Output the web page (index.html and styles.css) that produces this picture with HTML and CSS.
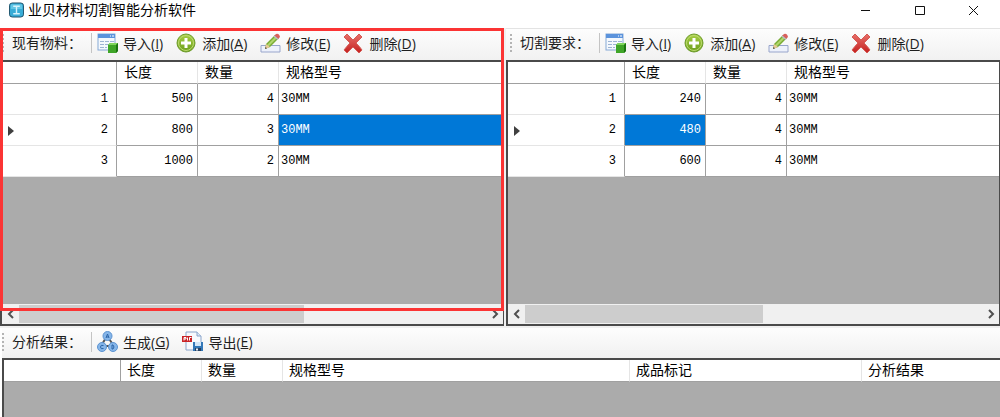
FILE: index.html
```html
<!DOCTYPE html>
<html lang="zh-cn">

<head>
  <meta charset="UTF-8">
  <title>业贝材料切割智能分析软件</title>
  <link rel="stylesheet" href="styles.css">
</head>

<body>
  <!-- 图标 -->
  <svg class="symbols" aria-hidden="true">
    <defs>
      <linearGradient id="green" x1="0" y1="0" x2="0" y2="1">
        <stop offset="0" stop-color="#a9cf45"/>
        <stop offset="1" stop-color="#6a9d1c"/>
      </linearGradient>
      <linearGradient id="red" x1="0" y1="0" x2="0" y2="1">
        <stop offset="0" stop-color="#e8706a"/>
        <stop offset="1" stop-color="#c4201f"/>
      </linearGradient>
    </defs>
    <symbol id="import" viewBox="0 0 21 21">
      <rect x="1" y="1" width="17" height="16" fill="#f4f8fd" stroke="#86a9d6"/>
      <rect x="1" y="1" width="17" height="4" fill="#5b93dc"/>
      <path d="M13 3h1M15 3h2" stroke="#fff"/>
      <path d="M3 8.500h4M8 8.500h4M13 8.500h4M3 11.500h4M8 11.500h4M3 14.500h4M8 14.500h2" stroke="#9db4d3"/>
      <path d="M11 12l2-2h8v8l-2 2h-8z" fill="#3fa528"/>
      <path d="M11 12l2-2h8l-2 2z" fill="#7fd45c"/>
      <path d="M19 12l2-2v8l-2 2z" fill="#1b7410"/>
    </symbol>
    <symbol id="add" viewBox="0 0 21 21">
      <circle cx="10" cy="10" r="9" fill="url(#green)" stroke="#6f9d2c"/>
      <circle cx="10" cy="10" r="7.500" fill="none" stroke="#bcdb70"/>
      <path d="M8.500 5h3v3.500H15v3h-3.500V15h-3v-3.500H5v-3h3.500z" fill="#fff"/>
    </symbol>
    <symbol id="edit" viewBox="0 0 21 21">
      <path d="M1 12.500h19v6.500H1z" fill="#edf1fb" stroke="#98a5cb"/>
      <path d="M5 16l1-5L15 2l4 3-9 9z" fill="#79ab34"/>
      <path d="M7 12L16 3l1.500 1.500-9 9z" fill="#b0d66c"/>
      <path d="M14 3l2-2q3-1 4 3l-2 2z" fill="#d9605c"/>
      <path d="M13.500 3.500l1-1 4 3.500-1 1z" fill="#b9bcc4"/>
      <path d="M5 16l1-5 4 3z" fill="#e9c898"/>
      <path d="M5 16l.5-2 1.500 1.200z" fill="#444"/>
    </symbol>
    <symbol id="delete" viewBox="0 0 21 21">
      <path d="M4 1l6 6 6-6 3 3q-3 3-6 6 4 4 6 7l-3 3q-3-3-6-6-3 3-6 6l-3-3q3-4 6-7-3-3-6-6z" fill="url(#red)" stroke="#d55a54"/>
    </symbol>
    <symbol id="generate" viewBox="0 0 21 21">
      <path d="M10 5L4 15h13z" fill="none" stroke="#555" stroke-width="2"/>
      <g fill="#86b6e9" stroke="#5c93d1">
        <circle cx="10.500" cy="5" r="4.500"/>
        <circle cx="5" cy="16" r="4.500"/>
        <circle cx="16" cy="16" r="4.500"/>
      </g>
      <g fill="none" stroke="#2b64a8">
        <path d="M9 7l1.500-4L12 7M9.500 6h2"/>
        <path d="M6.500 14.500q-3-1-3 1.500t3 1.500"/>
        <path d="M15 14v4h1q2-2 0-4z"/>
      </g>
    </symbol>
    <symbol id="export" viewBox="0 0 21 21">
      <path d="M4 1h11l4 4v14H4z" fill="#f7f9fd" stroke="#8aa5cb"/>
      <path d="M15 1v4h4" fill="#dbe6f5" stroke="#8aa5cb"/>
      <path d="M0 5h10v6H0z" fill="#c92327"/>
      <path d="M2 9.500V6.500h2v1.500H2M5.500 6.500v3M7.500 9.500v-3h2" fill="none" stroke="#fff"/>
      <path d="M11 11h10v9H11z" fill="#3377b7"/>
      <path d="M13 11h6v4h-6z" fill="#d3e6f7"/>
      <path d="M13 17h6v3h-6z" fill="#243f60"/>
      <path d="M14 17.500h2v2h-2z" fill="#e6eef7"/>
    </symbol>
    <symbol id="left" viewBox="0 0 8 10">
      <path d="M6 1L2 5l4 4" fill="none" stroke="#505050" stroke-width="2"/>
    </symbol>
    <symbol id="right" viewBox="0 0 8 10">
      <path d="M2 1l4 4-4 4" fill="none" stroke="#505050" stroke-width="2"/>
    </symbol>
  </svg>

  <div class="window">
    <header class="titlebar">
      <svg class="app-icon" viewBox="0 0 16 16">
        <rect x=".5" y=".5" width="15" height="15" rx="3" fill="#38acd6" stroke="#1b4e66"/>
        <path d="M2 2h12v5H2z" fill="#62c6e6"/>
        <path d="M4.500 4h7M8 4v8M4.500 12h7" fill="none" stroke="#d5f3fc" stroke-width="1.500"/>
      </svg>
      <h1>业贝材料切割智能分析软件</h1>
      <div class="window-btns">
        <button aria-label="最小化"><svg viewBox="0 0 11 11"><path d="M1 5.500h9"/></svg></button>
        <button aria-label="最大化"><svg viewBox="0 0 11 11"><path d="M1.500 1.500h9v8h-9z"/></svg></button>
        <button aria-label="关闭"><svg viewBox="0 0 11 11"><path d="M1 1l9 9M10 1l-9 9"/></svg></button>
      </div>
    </header>

    <main class="panes">
      <!-- 现有物料 -->
      <section class="pane stock">
        <div class="toolbar">
          <span class="grip"></span>
          <h2>现有物料：</h2>
          <button><svg><use href="#import"/></svg>导入(<u>I</u>)</button>
          <button><svg><use href="#add"/></svg>添加(<u>A</u>)</button>
          <button><svg><use href="#edit"/></svg>修改(<u>E</u>)</button>
          <button><svg><use href="#delete"/></svg>删除(<u>D</u>)</button>
        </div>
        <div class="grid">
          <table>
            <colgroup><col class="col-head"><col class="col-num"><col class="col-num"><col></colgroup>
            <thead>
              <tr><th></th><th>长度</th><th>数量</th><th>规格型号</th></tr>
            </thead>
            <tbody>
              <tr><th>1</th><td>500</td><td>4</td><td>30MM</td></tr>
              <tr class="current"><th>2</th><td>800</td><td>3</td><td class="selected">30MM</td></tr>
              <tr><th>3</th><td>1000</td><td>2</td><td>30MM</td></tr>
            </tbody>
          </table>
          <div class="scrollbar">
            <button aria-label="向左"><svg><use href="#left"/></svg></button>
            <div class="track"><div class="thumb"></div></div>
            <button aria-label="向右"><svg><use href="#right"/></svg></button>
          </div>
        </div>
        <div class="highlight"></div>
      </section>

      <!-- 切割要求 -->
      <section class="pane demand">
        <div class="toolbar">
          <span class="grip"></span>
          <h2>切割要求：</h2>
          <button><svg><use href="#import"/></svg>导入(<u>I</u>)</button>
          <button><svg><use href="#add"/></svg>添加(<u>A</u>)</button>
          <button><svg><use href="#edit"/></svg>修改(<u>E</u>)</button>
          <button><svg><use href="#delete"/></svg>删除(<u>D</u>)</button>
        </div>
        <div class="grid">
          <table>
            <colgroup><col class="col-head"><col class="col-num"><col class="col-num"><col></colgroup>
            <thead>
              <tr><th></th><th>长度</th><th>数量</th><th>规格型号</th></tr>
            </thead>
            <tbody>
              <tr><th>1</th><td>240</td><td>4</td><td>30MM</td></tr>
              <tr class="current"><th>2</th><td class="selected">480</td><td>4</td><td>30MM</td></tr>
              <tr><th>3</th><td>600</td><td>4</td><td>30MM</td></tr>
            </tbody>
          </table>
          <div class="scrollbar">
            <button aria-label="向左"><svg><use href="#left"/></svg></button>
            <div class="track"><div class="thumb"></div></div>
            <button aria-label="向右"><svg><use href="#right"/></svg></button>
          </div>
        </div>
      </section>
    </main>

    <!-- 分析结果 -->
    <section class="pane result">
      <div class="toolbar">
        <span class="grip"></span>
        <h2>分析结果：</h2>
        <button><svg><use href="#generate"/></svg>生成(<u>G</u>)</button>
        <button><svg><use href="#export"/></svg>导出(<u>E</u>)</button>
      </div>
      <div class="grid">
        <table>
          <colgroup><col class="col-head"><col class="col-num"><col class="col-num"><col class="col-spec"><col class="col-mark"><col></colgroup>
          <thead>
            <tr><th></th><th>长度</th><th>数量</th><th>规格型号</th><th>成品标记</th><th>分析结果</th></tr>
          </thead>
        </table>
      </div>
    </section>
  </div>
</body>

</html>
```
FILE: styles.css
```css
* {
  box-sizing: border-box;
}

body {
  margin: 0;
  background-color: #fff;
  color: #000;
  font-family: "Open Sans", "Noto Sans CJK SC", sans-serif;
  font-size: 14px;
}

button {
  padding: 0;
  border: none;
  background: none;
  color: inherit;
  font: inherit;
}

.symbols {
  position: absolute;
  width: 0;
  height: 0;
}

.window {
  display: grid;
  grid-template-rows: 28px 1fr 91px;
  min-height: 100vh;
}

/* 标题栏 */
.titlebar {
  display: flex;
  align-items: center;
  padding-left: 9px;
  padding-bottom: 8px;
}

.app-icon {
  width: 15px;
  height: 16px;
  margin-right: 4px;
}

h1,
h2 {
  margin: 0;
  font-size: 14px;
  font-weight: normal;
  line-height: 20px;
  white-space: nowrap;
}

.window-btns {
  display: flex;
  margin-left: auto;
}

.window-btns button {
  display: flex;
  justify-content: center;
  width: 54px;
}

.window-btns svg {
  width: 11px;
  height: 11px;
  fill: none;
  stroke: #111;
}

/* 面板 */
.panes {
  display: grid;
  grid-template-columns: 504fr 494fr;
  column-gap: 2px;
  background-color: #f0f0f0;
}

.pane {
  display: flex;
  flex-direction: column;
  min-width: 0;
}

.stock {
  position: relative;
}

.result {
  padding-left: 2px;
  border-top: 2px solid #f0f0f0;
}

/* 红色标注框 */
.highlight {
  position: absolute;
  inset: 0 0 15px 0;
  border: 3px solid #fb3434;
  pointer-events: none;
}

/* 工具栏 */
.toolbar {
  display: flex;
  align-items: center;
  height: 32px;
  padding-left: 2px;
  padding-bottom: 3px;
  border-top: 1px solid #e3e3e3;
  background: linear-gradient(#fdfdfd, #f1f1f1);
  color: #1e1e1e;
  white-space: nowrap;
}

.demand .toolbar {
  padding-left: 4px;
}

.result .toolbar {
  height: 30px;
  padding-left: 0;
  border-top: none;
}

.grip {
  width: 2px;
  height: 18px;
  margin-right: 8px;
  background: repeating-linear-gradient(#b4b4b4 0 2px, transparent 2px 4px);
}

.toolbar h2 {
  width: 80px;
  margin-right: 5px;
  border-right: 1px solid #c4c4c4;
}

.toolbar button {
  display: flex;
  align-items: center;
  margin-right: 13px;
}

.toolbar svg {
  width: 21px;
  height: 21px;
  margin-right: 5px;
}

/* 表格 */
.grid {
  display: flex;
  flex: 1;
  flex-direction: column;
  border: 2px solid #4a4a4a;
  border-right-width: 1px;
  background-color: #ababab;
}

.result .grid {
  border-bottom: none;
  border-right: none;
}

table {
  width: 100%;
  border-collapse: separate;
  border-spacing: 0;
  table-layout: fixed;
  background-color: #fff;
}

.col-head {
  width: 117px;
}

.stock .col-head {
  width: 115px;
}

.col-num {
  width: 81px;
}

.col-spec {
  width: 347px;
}

.col-mark {
  width: 232px;
}

th,
td {
  padding: 0;
  border-right: 1px solid #a0a0a0;
  border-bottom: 1px solid #a0a0a0;
  font-weight: normal;
  line-height: 20px;
}

thead th {
  height: 22px;
  padding-bottom: 2px;
  padding-left: 7px;
  border-right-color: #e5e5e5;
  line-height: 19px;
  text-align: left;
}

.result thead th {
  padding-left: 6px;
}

thead th:first-child {
  border-right-color: #a0a0a0;
}

tbody th,
td {
  height: 31px;
  padding-right: 4px;
  font-family: "Liberation Mono", "Noto Sans CJK SC", monospace;
  font-size: 12px;
  text-align: right;
}

tbody th {
  padding-right: 8px;
  border-bottom-color: #e5e5e5;
}

tr > :last-child {
  border-right: none;
}

td:last-child {
  padding-left: 2px;
  text-align: left;
}

.current th::before {
  content: "";
  float: left;
  margin-top: 6px;
  margin-left: 6px;
  border: 5px solid transparent;
  border-right: none;
  border-left: 6px solid #404040;
}

.selected {
  background-color: #0078d7;
  color: #fff;
}

/* 滚动条 */
.scrollbar {
  display: flex;
  height: 20px;
  margin-top: auto;
  background-color: #f0f0f0;
}

.scrollbar button {
  display: flex;
  align-items: center;
  justify-content: center;
  width: 17px;
}

.scrollbar svg {
  width: 8px;
  height: 10px;
}

.track {
  flex: 1;
  padding: 1px 0;
}

.thumb {
  width: 61%;
  height: 100%;
  background-color: #cdcdcd;
}

.demand .thumb {
  width: 52%;
}
```
